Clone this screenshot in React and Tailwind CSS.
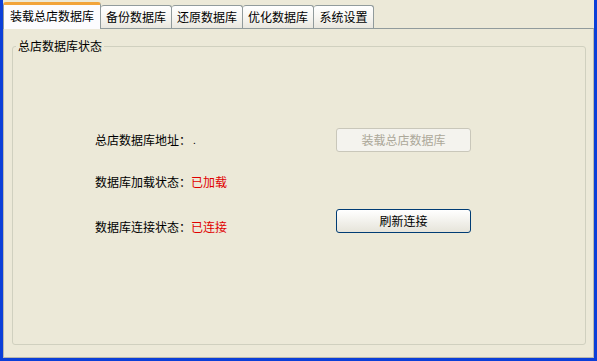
import React, { useState } from 'react';

const tabs = [
  { label: '装载总店数据库', w: 'w-[98px]' },
  { label: '备份数据库', w: 'w-[71px]' },
  { label: '还原数据库', w: 'w-[71px]' },
  { label: '优化数据库', w: 'w-[71px]' },
  { label: '系统设置', w: 'w-[60px]' },
];

const App = () => {
  const [active, setActive] = useState(0);

  return (
    <div
      className="w-[597px] h-[361px] bg-[#0b3fd8] pl-[3px] pr-[3px] pb-[3px] flex"
      style={{ fontFamily: '"Noto Sans CJK SC", "Noto Sans", sans-serif' }}
    >
      <div className="flex-1 bg-[#ECE9D8] flex flex-col text-[12px] leading-[16px] text-black">
        {/* tab strip */}
        <div className="h-[28px] flex items-end">
          {tabs.map((t, i) =>
            i === active ? (
              <button
                key={t.label}
                onClick={() => setActive(i)}
                className={`${t.w} h-[27px] -mb-px relative z-10 bg-[#FCFCFE] border border-b-0 border-[#919B9C] border-t-[3px] border-t-[#F2A43A] rounded-t-[3px] flex items-center justify-center pb-[2px]`}
              >
                {t.label}
              </button>
            ) : (
              <button
                key={t.label}
                onClick={() => setActive(i)}
                className={`${t.w} h-[23px] bg-gradient-to-b from-white via-[#F7F6F2] to-[#E9E7DF] border border-b-0 border-l-0 border-[#919B9C] rounded-t-[3px] flex items-center justify-center`}
              >
                {t.label}
              </button>
            )
          )}
        </div>

        {/* panel */}
        <div className="flex-1 border border-[#B9B8AE] border-t-[#919B9C] bg-[#ECE9D8] pt-[9px] pl-[8px] pr-[7px] pb-[12px] flex flex-col">
          <fieldset className="flex-1 border border-[#D0D0BF] rounded-[3px] flex flex-col">
            <legend className="ml-[3px] px-[2px] text-black">总店数据库状态</legend>
            <div className="mt-[74px] flex pl-[82px]">
              <div className="w-[241px] flex flex-col">
                <div className="h-[24px] flex items-center">
                  总店数据库地址：<span className="ml-[2px] text-[10px]">.</span>
                </div>
                <div className="h-[24px] flex items-center mt-[18px]">
                  数据库加载状态：<span className="text-[#E00000]">已加载</span>
                </div>
                <div className="h-[24px] flex items-center mt-[21px]">
                  数据库连接状态：<span className="text-[#E00000]">已连接</span>
                </div>
              </div>
              <div className="flex flex-col">
                <button
                  disabled
                  className="w-[135px] h-[24px] border border-[#C9C7BA] rounded-[3px] bg-[#F4F3EE] text-[#ACA899] flex items-center justify-center"
                >
                  装载总店数据库
                </button>
                <button className="mt-[57px] w-[135px] h-[24px] border border-[#003C74] rounded-[3px] bg-gradient-to-b from-white to-[#E6E4DA] flex items-center justify-center">
                  刷新连接
                </button>
              </div>
            </div>
          </fieldset>
        </div>
      </div>
    </div>
  );
};

export default App;
